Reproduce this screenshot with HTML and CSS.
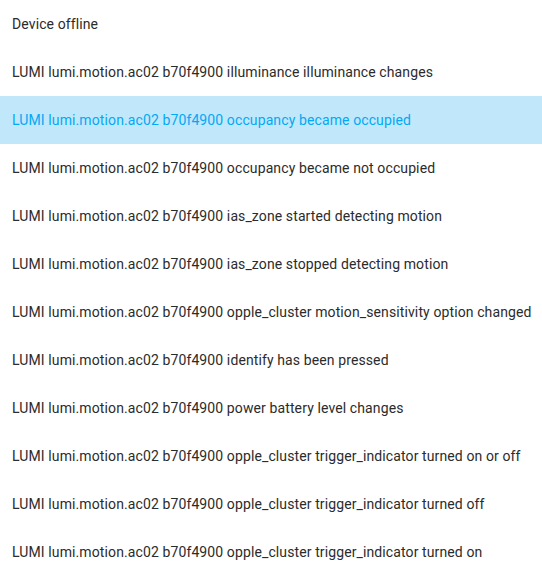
FILE: index.html
```html
<!DOCTYPE html>
<html lang="en">
<head>
  <meta charset="UTF-8">
  <meta name="viewport" content="width=device-width, initial-scale=1.0">
  <title>Device triggers</title>
  <link rel="stylesheet" href="styles.css">
</head>
<body>
  <ul class="list">
    <li class="item">Device offline</li>
    <li class="item">LUMI lumi.motion.ac02 b70f4900 illuminance illuminance changes</li>
    <li class="item selected">LUMI lumi.motion.ac02 b70f4900 occupancy became occupied</li>
    <li class="item">LUMI lumi.motion.ac02 b70f4900 occupancy became not occupied</li>
    <li class="item">LUMI lumi.motion.ac02 b70f4900 ias_zone started detecting motion</li>
    <li class="item">LUMI lumi.motion.ac02 b70f4900 ias_zone stopped detecting motion</li>
    <li class="item">LUMI lumi.motion.ac02 b70f4900 opple_cluster motion_sensitivity option changed</li>
    <li class="item">LUMI lumi.motion.ac02 b70f4900 identify has been pressed</li>
    <li class="item">LUMI lumi.motion.ac02 b70f4900 power battery level changes</li>
    <li class="item">LUMI lumi.motion.ac02 b70f4900 opple_cluster trigger_indicator turned on or off</li>
    <li class="item">LUMI lumi.motion.ac02 b70f4900 opple_cluster trigger_indicator turned off</li>
    <li class="item">LUMI lumi.motion.ac02 b70f4900 opple_cluster trigger_indicator turned on</li>
  </ul>
</body>
</html>
```

FILE: styles.css
```css
body {
  margin: 0;
  background: #fff;
  font-family: Roboto, "Noto Sans", sans-serif;
  font-size: 14px;
  letter-spacing: 0.11px;
  color: #2b2b2b;
}
.list {
  list-style: none;
  margin: 0;
  padding: 0;
}
.item {
  height: 48px;
  display: flex;
  align-items: center;
  padding: 0 12px;
  white-space: nowrap;
}
.selected {
  background: #c1e7fb;
  color: #03a9f4;
}
```
